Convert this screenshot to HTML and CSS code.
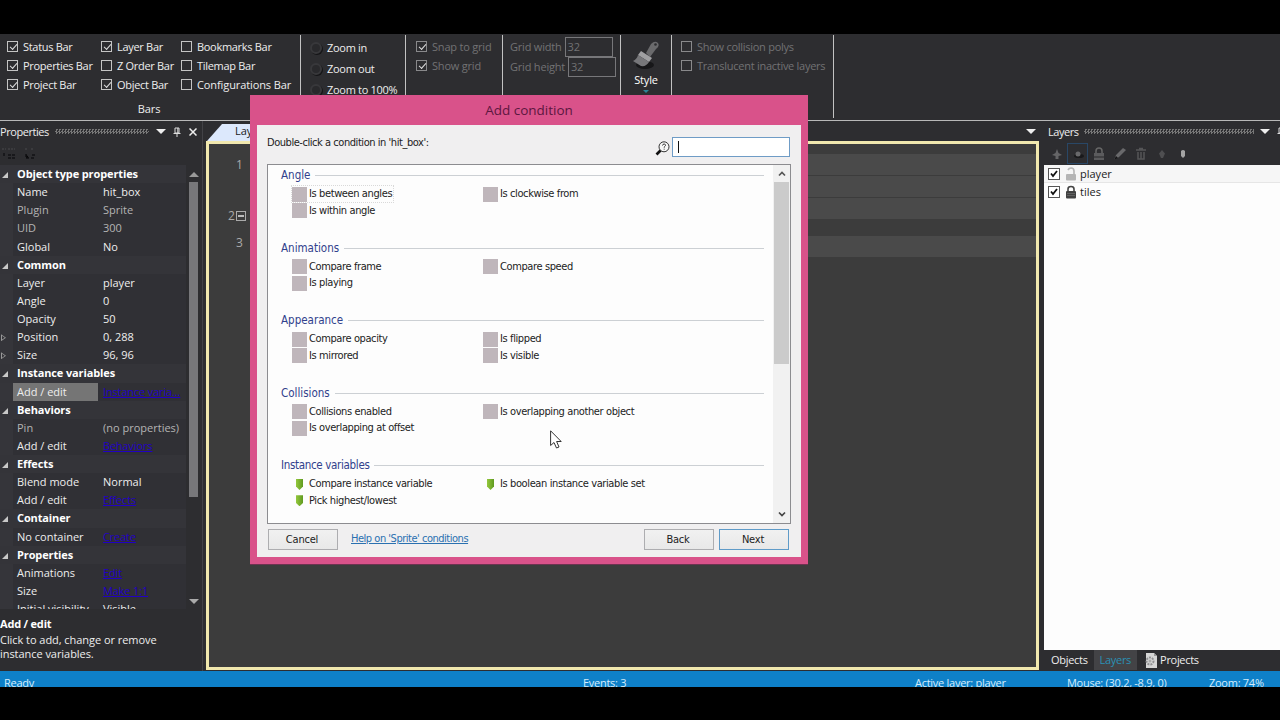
FILE: index.html
```html
<!DOCTYPE html>
<html lang="en">
<head>
    <meta charset="UTF-8">
    <title>Layout editor</title>
    <link rel="stylesheet" href="styles.css">
</head>
<body>
<div class="app">
    <header class="ribbon">
        <section class="group bars">
            <div class="checks">
                <label class="on"><i></i><span>Status Bar</span></label>
                <label class="on"><i></i><span>Layer Bar</span></label>
                <label><i></i><span>Bookmarks Bar</span></label>
                <label class="on"><i></i><span>Properties Bar</span></label>
                <label><i></i><span>Z Order Bar</span></label>
                <label><i></i><span>Tilemap Bar</span></label>
                <label class="on"><i></i><span>Project Bar</span></label>
                <label class="on"><i></i><span>Object Bar</span></label>
                <label class="wide"><i></i><span>Configurations Bar</span></label>
            </div>
            <div class="caption">Bars</div>
        </section>
        <section class="group zooms">
            <div><b class="lens"></b>Zoom in</div>
            <div><b class="lens"></b>Zoom out</div>
            <div><b class="lens"></b>Zoom to 100%</div>
        </section>
        <section class="group grid-checks dim">
            <label class="on"><i></i><span>Snap to grid</span></label>
            <label class="on"><i></i><span>Show grid</span></label>
        </section>
        <section class="group grid-size dim">
            <div>Grid width<em>32</em></div>
            <div>Grid height<em>32</em></div>
        </section>
        <section class="group style">
            <svg width="28" height="30" viewBox="0 0 28 30">
                <ellipse cx="13" cy="25" rx="9" ry="4" fill="#171719"/>
                <path d="M14 13 L19 4 Q23 0 26 3 Q28 6 24 9 L18 17Z" fill="#6a6a6c"/>
                <circle cx="23.500" cy="4.500" r="1.300" fill="#2d2d30"/>
                <path d="M9 11 L20 18 L17 22 L6 15Z" fill="#a0a0a2"/>
                <path d="M6 15 L17 22 Q14 27 9 26 L1 21 Q5 19 6 15Z" fill="#77777a"/>
            </svg>
            <span>Style</span>
            <b class="drop"></b>
        </section>
        <section class="group view-checks dim">
            <label><i></i><span>Show collision polys</span></label>
            <label><i></i><span>Translucent inactive layers</span></label>
        </section>
    </header>

    <main>
        <aside class="properties">
            <div class="panel-title">
                <span>Properties</span><b class="grip"></b>
                <b class="down"></b>
                <svg class="pin" width="8" height="10" viewBox="0 0 8 10"><path d="M2 1H6V6H2Z M4.800 1V6 M0.500 6.500H7.500 M4 6.500V10" fill="none" stroke="#ddd"/></svg>
                <svg class="close" width="8" height="8" viewBox="0 0 8 8"><path d="M0.500 0.500L7.500 7.500M7.500 0.500L0.500 7.500" stroke="#eee" stroke-width="1.500"/></svg>
            </div>
            <div class="sort">
                <svg width="36" height="14" viewBox="0 0 36 14"><path d="M1 3H5M7 3H14M24 3H27M30 3H33" stroke="#4b4b4d" stroke-dasharray="2 1"/><path d="M3 7V11M7 9H15M7 12H14M25 8V12H28M31 9H35M30 12H34" stroke="#121214" stroke-width="1.500" stroke-dasharray="3 1"/></svg>
            </div>
            <div class="prop-area">
                <div class="prop-rows">
                    <div class="head">Object type properties</div>
                    <div class="row"><span>Name</span><span>hit_box</span></div>
                    <div class="row faded"><span>Plugin</span><span>Sprite</span></div>
                    <div class="row faded"><span>UID</span><span>300</span></div>
                    <div class="row"><span>Global</span><span>No</span></div>
                    <div class="head">Common</div>
                    <div class="row"><span>Layer</span><span>player</span></div>
                    <div class="row"><span>Angle</span><span>0</span></div>
                    <div class="row"><span>Opacity</span><span>50</span></div>
                    <div class="row more"><span>Position</span><span>0, 288</span></div>
                    <div class="row more"><span>Size</span><span>96, 96</span></div>
                    <div class="head">Instance variables</div>
                    <div class="row selected"><span>Add / edit</span><a>Instance varia...</a></div>
                    <div class="head">Behaviors</div>
                    <div class="row faded"><span>Pin</span><span>(no properties)</span></div>
                    <div class="row"><span>Add / edit</span><a>Behaviors</a></div>
                    <div class="head">Effects</div>
                    <div class="row"><span>Blend mode</span><span>Normal</span></div>
                    <div class="row"><span>Add / edit</span><a>Effects</a></div>
                    <div class="head">Container</div>
                    <div class="row"><span>No container</span><a>Create</a></div>
                    <div class="head">Properties</div>
                    <div class="row"><span>Animations</span><a>Edit</a></div>
                    <div class="row"><span>Size</span><a>Make 1:1</a></div>
                    <div class="row"><span>Initial visibility</span><span>Visible</span></div>
                </div>
                <div class="prop-scroll"><b class="up"></b><b class="thumb"></b><b class="dn"></b></div>
            </div>
            <div class="help">
                <strong>Add / edit</strong>
                <p>Click to add, change or remove</p>
                <p>instance variables.</p>
            </div>
        </aside>

        <section class="editor">
            <div class="tabs"><div class="tab">Layout 1</div><b class="down"></b></div>
            <div class="sheet">
                <div class="numbers">
                    <div class="n1">1</div>
                    <div class="n2">2<i></i></div>
                    <div class="n3">3</div>
                </div>
                <div class="events">
                    <div></div><div></div><div></div><div class="last"></div>
                </div>
            </div>
        </section>

        <aside class="layers">
            <div class="panel-title">
                <span>Layers</span><b class="grip"></b><b class="down"></b>
                <svg class="pin" width="8" height="10" viewBox="0 0 8 10"><path d="M2 1H6V6H2Z M4.800 1V6 M0.500 6.500H7.500" fill="none" stroke="#ddd"/></svg>
            </div>
            <div class="tools">
                <span><svg width="12" height="14" viewBox="0 0 12 14"><path d="M6 2L7.500 6L11 8L7.500 9V12H4.500V9L1 8L4.500 6Z" fill="#656567"/></svg></span>
                <span class="active"><svg width="12" height="12" viewBox="0 0 12 12"><ellipse cx="7" cy="8" rx="5" ry="2" fill="#19191b"/><circle cx="6" cy="6" r="2.500" fill="#69696b"/></svg></span>
                <span><svg width="12" height="14" viewBox="0 0 12 14"><path d="M3 7V4Q3 1 6 1Q9 1 9 4V7" fill="none" stroke="#666" stroke-width="1.500"/><rect x="1" y="6" width="10" height="7" fill="#5b5b5d"/><path d="M1 10H11" stroke="#29292b"/></svg></span>
                <span><svg width="14" height="14" viewBox="0 0 14 14"><path d="M1 13L3 8L10 1L13 3L6 10Z" fill="#69696b"/><path d="M1 13L3 9L5 11Z" fill="#141416"/></svg></span>
                <span><svg width="12" height="14" viewBox="0 0 12 14"><path d="M1 3H11M4 1.500H8M3 5V12H9V5M6 5V12" stroke="#555557" fill="none" stroke-width="1.500"/></svg></span>
                <span><svg width="10" height="14" viewBox="0 0 10 14"><path d="M5 3L8 6.500L6 11H4L2 6.500Z" fill="#4f4f51"/></svg></span>
                <span><svg width="10" height="14" viewBox="0 0 10 14"><path d="M3 4Q5 2 7 4V9L5 11L3 9Z" fill="#a4a4a4"/></svg></span>
            </div>
            <div class="layer-list">
                <div class="layer current">
                    <svg class="box" width="12" height="12" viewBox="0 0 12 12"><rect x=".5" y=".5" width="11" height="11" fill="#fff" stroke="#555"/><path d="M3 5.500L5 8L9 3" fill="none" stroke="#111" stroke-width="1.800"/></svg>
                    <svg width="12" height="14" viewBox="0 0 12 14"><path d="M3 3Q4 1 6 1Q9 1 9 4V8" fill="none" stroke="#b9b9b9" stroke-width="1.700"/><rect x="1" y="7" width="10" height="6.500" rx="1" fill="#b5b5b5"/></svg>
                    <span>player</span>
                </div>
                <div class="layer">
                    <svg class="box" width="12" height="12" viewBox="0 0 12 12"><rect x=".5" y=".5" width="11" height="11" fill="#fff" stroke="#555"/><path d="M3 5.500L5 8L9 3" fill="none" stroke="#111" stroke-width="1.800"/></svg>
                    <svg width="12" height="14" viewBox="0 0 12 14"><path d="M3 7V4Q3 1.500 6 1.500Q9 1.500 9 4V7" fill="none" stroke="#444" stroke-width="1.600"/><rect x="1" y="6" width="10" height="7.500" rx="1" fill="#424242"/><path d="M2 8.500H10M2 10.500H10" stroke="#777" stroke-width=".6"/></svg>
                    <span>tiles</span>
                </div>
            </div>
            <div class="dock-tabs">
                <span>Objects</span><span class="active">Layers</span>
                <span class="proj"><svg width="14" height="15" viewBox="0 0 14 15"><path d="M2 0H10L13 3V15H2Z" fill="#d6d6d6"/><path d="M10 0V3H13" fill="#999"/><circle cx="6" cy="8" r="3.500" fill="none" stroke="#909092" stroke-width="2" stroke-dasharray="2 1"/><circle cx="6" cy="8" r="1.500" fill="#aaa"/></svg><span>Projects</span></span>
            </div>
        </aside>
    </main>

    <footer class="status">
        <span class="ready">Ready</span>
        <span class="count">Events: 3</span>
        <span class="active-layer">Active layer: player</span>
        <span class="mouse">Mouse: (30.2, -8.9, 0)</span>
        <span class="zoom">Zoom: 74%</span>
    </footer>
</div>

<div class="dialog">
    <h1>Add condition</h1>
    <div class="content">
        <div class="prompt">
            <span>Double-click a condition in 'hit_box':</span>
            <svg width="15" height="15" viewBox="0 0 15 15"><circle cx="9" cy="5.800" r="5" fill="#f6f6f6" stroke="#333"/><path d="M5.500 9.500L1.500 13.500" stroke="#111" stroke-width="2.600"/><path d="M7.500 4.500Q7.700 3 9.200 3Q10.700 3.200 10.500 4.600Q9.200 5.500 9.200 6.700M9.200 7.700V8.600" fill="none" stroke="#333"/></svg>
            <div class="search"></div>
        </div>
        <div class="list">
            <div class="conditions">
                <section>
                    <h2>Angle</h2>
                    <div class="items">
                        <div class="focus"><i></i><span>Is between angles</span></div><div><i></i><span>Is clockwise from</span></div>
                        <div><i></i><span>Is within angle</span></div>
                    </div>
                </section>
                <section>
                    <h2>Animations</h2>
                    <div class="items">
                        <div><i></i><span>Compare frame</span></div><div><i></i><span>Compare speed</span></div>
                        <div><i></i><span>Is playing</span></div>
                    </div>
                </section>
                <section>
                    <h2>Appearance</h2>
                    <div class="items">
                        <div><i></i><span>Compare opacity</span></div><div><i></i><span>Is flipped</span></div>
                        <div><i></i><span>Is mirrored</span></div><div><i></i><span>Is visible</span></div>
                    </div>
                </section>
                <section>
                    <h2>Collisions</h2>
                    <div class="items">
                        <div><i></i><span>Collisions enabled</span></div><div><i></i><span>Is overlapping another object</span></div>
                        <div><i></i><span>Is overlapping at offset</span></div>
                    </div>
                </section>
                <section>
                    <h2 class="long">Instance variables</h2>
                    <div class="items tags">
                        <div><i></i><span>Compare instance variable</span></div><div><i></i><span>Is boolean instance variable set</span></div>
                        <div><i></i><span>Pick highest/lowest</span></div>
                    </div>
                </section>
            </div>
            <div class="scrollbar">
                <svg width="8" height="6" viewBox="0 0 8 6"><path d="M1 4.500L4 1.500L7 4.500" fill="none" stroke="#555" stroke-width="1.700"/></svg>
                <b></b>
                <svg class="end" width="8" height="6" viewBox="0 0 8 6"><path d="M1 1.500L4 4.500L7 1.500" fill="none" stroke="#444" stroke-width="1.700"/></svg>
            </div>
        </div>
        <div class="buttons">
            <button>Cancel</button>
            <a>Help on 'Sprite' conditions</a>
            <button class="back">Back</button>
            <button class="next">Next</button>
        </div>
    </div>
</div>

<svg class="cursor" width="12" height="19" viewBox="0 0 12 19"><path d="M0.600 0.800V15.500L4 12.500L6.500 18L9 17L6.600 11.500H11.200Z" fill="#fff" stroke="#333"/></svg>
</body>
</html>
```

FILE: styles.css
```css
* {
    box-sizing: border-box;
}
body {
    margin: 0;
    padding: 34px 0 33px;
    height: 720px;
    overflow: hidden;
    background: #000;
    color: #eee;
    font: 11px/14px "Open Sans", sans-serif;
    white-space: nowrap;
}
i, em {
    font-style: normal;
}
p {
    margin: 0;
}
.app {
    height: 653px;
    overflow: hidden;
    background: #2d2d30;
    display: flex;
    flex-direction: column;
}

/* ribbon */
.ribbon {
    height: 87px;
    flex: none;
    display: flex;
    border-bottom: 1px solid #b8b8b8;
    letter-spacing: -0.3px;
}
.group {
    height: 83px;
    margin-top: 1px;
    border-right: 1px solid #c2c2c2;
}
.ribbon label {
    display: flex;
    align-items: center;
    height: 19px;
    gap: 5px;
}
.ribbon .wide {
    letter-spacing: -0.1px;
}
.ribbon label i {
    width: 11px;
    height: 11px;
    flex: none;
    border: 1px solid #c4c4c4;
}
.ribbon label.on i::after {
    content: "";
    display: block;
    width: 6px;
    height: 3px;
    margin: 2px 0 0 2px;
    border: solid #ddd;
    border-width: 0 0 1px 1px;
    transform: rotate(-48deg);
}
.bars {
    width: 301px;
}
.checks {
    display: grid;
    grid-template-columns: 94px 80px 120px;
    padding: 2px 0 0 7px;
}
.caption {
    margin-top: 8px;
    padding-right: 2px;
    text-align: center;
    letter-spacing: -0.1px;
}
.zooms {
    width: 105px;
    padding: 2px 0 0 9px;
}
.zooms div {
    height: 21px;
    display: flex;
    align-items: center;
}
.lens {
    width: 12px;
    height: 12px;
    margin-right: 5px;
    border: 2px solid #38383b;
    border-radius: 50%;
    background: #29292c;
    box-shadow: 1px 1px 0 #151517;
}
.dim {
    color: #727274;
    letter-spacing: -0.2px;
}
.ribbon .dim label i {
    border-color: #89898b;
}
.grid-checks {
    width: 97px;
    padding: 2px 0 0 10px;
}
.grid-size {
    width: 118px;
    padding: 2px 0 0 7px;
}
.grid-size div {
    height: 20px;
    display: flex;
    align-items: center;
}
.grid-size em {
    width: 48px;
    height: 20px;
    margin-left: 3px;
    padding: 2px 2px;
    border: 1px solid #77777a;
}
.style {
    width: 51px;
    padding-top: 5px;
    display: flex;
    flex-direction: column;
    align-items: center;
}
.style span {
    margin-top: 3px;
    color: #fff;
    letter-spacing: -0.2px;
}
.drop {
    margin-top: 3px;
    border: 3px solid transparent;
    border-top-color: #2c8496;
}
.view-checks {
    width: 162px;
    padding: 2px 0 0 9px;
    letter-spacing: -0.27px;
}

/* docked panels */
main {
    height: 550px;
    flex: none;
    display: flex;
}
.panel-title {
    height: 21px;
    display: flex;
    align-items: center;
    letter-spacing: -0.45px;
}
.grip {
    height: 5px;
    background: conic-gradient(#777 25%, transparent 0 50%, #777 0 75%, transparent 0) 0 0/3px 3px;
}
.down {
    border: 5px solid transparent;
    border-top-color: #eee;
    border-bottom: 0;
}
.properties {
    width: 203px;
    display: flex;
    flex-direction: column;
    border-right: 1px solid #424246;
}
.properties .grip {
    width: 94px;
    margin: 0 7px 0 6px;
}
.properties .pin {
    margin: 0 8px 0 7px;
}
.sort {
    height: 23px;
    padding: 4px 0 0 1px;
}
.prop-area {
    height: 444px;
    overflow: hidden;
    display: flex;
    justify-content: space-between;
}
.prop-rows {
    width: 186px;
    background: linear-gradient(90deg, #35353a 13px, #303035 13px);
}
.prop-rows > div {
    height: 18.130px;
    line-height: 18px;
}
.head {
    padding-left: 17px;
    position: relative;
    background: #343439;
    color: #fff;
    font-weight: bold;
    letter-spacing: -0.12px;
}
.head::before {
    content: "";
    position: absolute;
    left: 2px;
    top: 7px;
    border: solid transparent;
    border-width: 0 0 6px 6px;
    border-bottom-color: #c8c8c8;
}
.row {
    display: grid;
    grid-template-columns: 85px 1fr;
    padding-left: 13px;
    position: relative;
}
.row span:first-child {
    padding-left: 4px;
}
.row > :last-child {
    padding-left: 5px;
}
.faded {
    color: #b4b4b4;
}
.row a {
    color: #2100c4;
    text-decoration: underline;
    letter-spacing: -0.15px;
}
.selected span {
    background: #757575;
}
.more::before {
    content: "";
    position: absolute;
    left: 1px;
    top: 6px;
    width: 5px;
    height: 7px;
    background: #999;
    clip-path: polygon(0 0, 100% 50%, 0 100%, 0 0, 20% 22%, 20% 78%, 75% 50%, 20% 22%);
}
.prop-scroll {
    width: 13px;
    display: flex;
    flex-direction: column;
    align-items: flex-start;
}
.up {
    margin-top: 7px;
    border: 5px solid transparent;
    border-top: 0;
    border-bottom-color: #999;
}
.thumb {
    width: 9px;
    height: 315px;
    margin-top: 5px;
    background: #77777a;
}
.dn {
    margin-top: 102px;
    border: 5px solid transparent;
    border-bottom: 0;
    border-top-color: #aaa;
}
.help {
    padding-top: 8px;
    letter-spacing: -0.05px;
}
.help strong {
    display: block;
    margin-bottom: 2px;
    color: #fff;
    letter-spacing: -0.2px;
}

/* event sheet */
.editor {
    width: 833px;
    margin-left: 3px;
}
.tabs {
    height: 20px;
    display: flex;
    align-items: flex-end;
    justify-content: space-between;
    padding-right: 3px;
}
.tabs .down {
    margin-bottom: 7px;
}
.tab {
    width: 110px;
    height: 17px;
    margin-left: 1px;
    padding-left: 28px;
    background: #dce8fc;
    clip-path: polygon(15px 0, 100% 0, 100% 100%, 0 100%);
    color: #222;
}
.sheet {
    height: 529px;
    display: flex;
    border: 3px solid #f1e8ae;
    background: #3c3c3c;
}
.numbers {
    width: 50px;
    color: #aaa;
    font-size: 12px;
}
.numbers .n1 {
    padding: 14px 0 0 27px;
}
.numbers .n2 {
    display: flex;
    align-items: center;
    padding: 37px 0 0 19px;
    gap: 1px;
}
.n2 i {
    width: 10px;
    height: 10px;
    padding: 3px 1px;
    border: 1px solid #aaa;
}
.n2 i::before {
    content: "";
    display: block;
    border-top: 2px solid #bbb;
}
.numbers .n3 {
    padding: 13px 0 0 27px;
}
.events {
    flex: 1;
    padding-top: 10px;
}
.events div {
    height: 21px;
    margin-bottom: 1px;
    background: #4a4a4a;
}
.events .last {
    margin-top: 17px;
}

/* layers */
.layers {
    width: 236px;
    margin-left: 5px;
    overflow: hidden;
}
.layers .panel-title {
    width: 250px;
    padding-left: 4px;
}
.layers .grip {
    width: 170px;
    margin: 0 6px 0 5px;
}
.layers .pin {
    margin-left: 7px;
}
.tools {
    height: 23px;
    display: flex;
    padding: 1px 0 0 2px;
}
.tools span {
    width: 21px;
    height: 21px;
    display: flex;
    align-items: center;
    justify-content: center;
}
.tools .active {
    border: 1px solid #294766;
}
.layer-list {
    height: 485px;
    background: #fdfdfd;
    color: #222;
}
.layer {
    height: 18px;
    display: flex;
    align-items: center;
    padding-left: 4px;
}
.layer .box {
    margin-right: 5px;
}
.layer span {
    margin-left: 3px;
}
.layer.current {
    background: #f6f6f6;
    border-bottom: 1px solid #e6e6e6;
}
.dock-tabs {
    height: 20px;
    display: flex;
    align-items: center;
    line-height: 20px;
    letter-spacing: -0.3px;
}
.dock-tabs > span {
    padding: 0 6px 0 7px;
}
.dock-tabs .active {
    padding: 0 6px;
    background: #434346;
    color: #2b91b5;
}
.dock-tabs .proj {
    display: flex;
    align-items: center;
    gap: 2px;
}

/* status bar */
.status {
    height: 24px;
    flex: none;
    display: grid;
    grid-template-columns: 579px 332px 152px 142px 1fr;
    padding: 5px 0 0 4px;
    background: #0e80c8;
    color: #d5ecfa;
    letter-spacing: -0.27px;
}

/* add condition window */
.dialog {
    position: absolute;
    left: 250px;
    top: 95px;
    width: 558px;
    height: 470px;
    padding: 0 7px;
    background: #d9528a;
    border-bottom: 1px solid #6d3350;
    font-family: "DejaVu Sans Condensed", "DejaVu Sans", sans-serif;
    letter-spacing: -0.39px;
    color: #222;
}
.dialog h1 {
    margin: 0;
    height: 30px;
    text-align: center;
    font: 13.500px/31px "Open Sans", sans-serif;
    letter-spacing: 0;
    color: #5c1740;
}
.content {
    height: 432px;
    padding: 0 10px;
    background: #f0eff0;
}
.prompt {
    height: 39px;
    display: flex;
}
.prompt span {
    flex: 1;
    margin-top: 11px;
    letter-spacing: -0.45px;
}
.prompt svg {
    margin: 16px 2px 0 0;
}
.search {
    width: 118px;
    height: 20px;
    margin: 12px 1px 0 0;
    padding: 3px 5px;
    border: 1px solid #6f9cc6;
    background: #fff;
}
.search::before {
    content: "";
    display: block;
    width: 1px;
    height: 12px;
    background: #111;
}
.list {
    height: 360px;
    display: flex;
    border: 1px solid #8c8c90;
    background: #fdfdfd;
}
.conditions {
    flex: 1;
    padding: 1px 9px 0 13px;
}
.conditions section {
    height: 72.550px;
}
.conditions h2 {
    display: flex;
    margin: 0 0 2px;
    height: 18px;
    font-size: 11.500px;
    line-height: 18px;
    font-weight: normal;
    letter-spacing: 0;
    color: #31418c;
}
.conditions .long {
    letter-spacing: -0.33px;
}
.conditions h2::after {
    content: "";
    flex: 1;
    height: 1px;
    margin: 9px 0 0 5px;
    background: #ccd0d4;
}
.items {
    display: grid;
    grid-template-columns: 191px 1fr;
    grid-auto-rows: 16.400px;
    padding-left: 11px;
}
.items > div {
    display: flex;
    align-items: center;
    justify-self: start;
}
.items i {
    width: 15px;
    height: 15px;
    margin-right: 2px;
    background: #bfb6bb;
}
.tags i {
    width: 7px;
    height: 11px;
    margin: 0 6px 0 4px;
    background: linear-gradient(90deg, #94c83d, #5f9a20);
    clip-path: polygon(0 0, 100% 0, 100% 70%, 50% 100%, 0 70%);
}
.focus {
    outline: 1px dotted #d9d9d9;
    padding-right: 1px;
}
.scrollbar {
    width: 17px;
    display: flex;
    flex-direction: column;
    align-items: center;
    background: #f1f1f1;
}
.scrollbar svg {
    margin-top: 6px;
}
.scrollbar b {
    width: 15px;
    height: 182px;
    margin-top: 5px;
    background: #cbcbcb;
}
.scrollbar .end {
    margin-top: auto;
    margin-bottom: 6px;
}
.buttons {
    display: flex;
    padding: 5px 2px 0 1px;
}
.buttons button {
    width: 70px;
    height: 21px;
    padding: 1px 2px 0 0;
    border: 1px solid #adadb0;
    background: linear-gradient(#f1f1f1, #e8e8e8);
    font: inherit;
    letter-spacing: -0.2px;
    color: #222;
}
.buttons a {
    margin-left: 13px;
    margin-top: 3px;
    color: #2a70b0;
    text-decoration: underline;
    letter-spacing: -0.48px;
}
.buttons .back {
    margin-left: auto;
}
.buttons .next {
    margin-left: 5px;
    border-color: #5f9bc8;
}
.cursor {
    position: absolute;
    left: 550px;
    top: 430px;
}
```
